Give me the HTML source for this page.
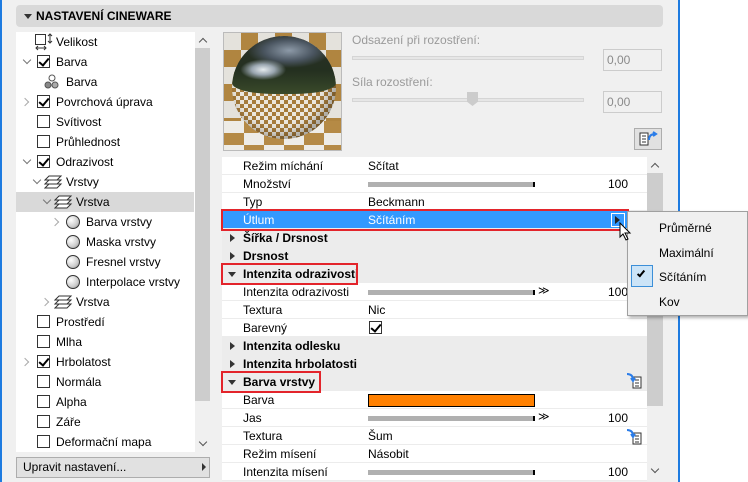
<!DOCTYPE html>
<html><head><meta charset="utf-8"><style>
*{box-sizing:border-box;margin:0;padding:0}
body{width:748px;height:482px;overflow:hidden;background:#f0f0f0;font-family:"Liberation Sans",sans-serif;font-size:12px;color:#000;position:relative}
.a{position:absolute}
.t{position:absolute;white-space:nowrap;line-height:14px}
.cb{position:absolute;width:13px;height:13px;border:1px solid #333;background:#fff}
.cb.c::after{content:"";position:absolute;left:3px;top:0px;width:4px;height:8px;border:solid #000;border-width:0 2px 2px 0;transform:rotate(40deg)}
.chev{position:absolute;width:6px;height:6px;border:solid #777;border-width:0 1.5px 1.5px 0}
.row{position:absolute;left:222px;width:425px;height:18px;background:#fff;border-bottom:1px solid #ececec}
.grp{background:#ececec;font-weight:bold}
.tri{position:absolute;left:8px;top:5px;width:0;height:0;border-left:5px solid #333;border-top:4px solid transparent;border-bottom:4px solid transparent}
.trid{position:absolute;left:6px;top:7px;width:0;height:0;border-top:5px solid #333;border-left:4px solid transparent;border-right:4px solid transparent}
.bar{position:absolute;left:146px;top:7px;width:167px;height:5px;background:#b0b0b0;border-right:2px solid #000}
.sph{position:absolute;width:14px;height:14px;border-radius:50%;border:1px solid #333;background:radial-gradient(circle at 35% 35%,#fff,#ccc 60%,#888)}
.red{position:absolute;border:2px solid #e3242b}
</style></head><body>
<div class="a" style="left:0;top:0;width:2px;height:482px;background:#1e7be0"></div>
<div class="a" style="left:678px;top:0;width:2px;height:482px;background:#1e7be0"></div>
<div class="a" style="left:680px;top:0;width:68px;height:482px;background:#fff"></div>
<!-- header -->
<div class="a" style="left:16px;top:5px;width:647px;height:22px;background:#d9d9d9;border-radius:4px"></div>
<div class="a" style="left:24px;top:14px;border-top:5px solid #333;border-left:4px solid transparent;border-right:4px solid transparent"></div>
<div class="t" style="left:36px;top:9px;font-weight:bold">NASTAVENÍ CINEWARE</div>
<!-- tree -->
<div class="a" style="left:16px;top:32px;width:179px;height:420px;background:#fff"></div>
<div class="a" style="left:195px;top:32px;width:15px;height:420px;background:#f0f0f0"></div>
<div class="a" style="left:195px;top:48px;width:15px;height:353px;background:#cdcdcd"></div>
<div class="chev" style="left:200px;top:39px;transform:rotate(-135deg);border-color:#555"></div>
<div class="chev" style="left:200px;top:439px;transform:rotate(45deg);border-color:#555"></div>
<div class="a" style="left:16px;top:192px;width:178px;height:20px;background:#d9d9d9"></div>
<svg class="a" style="left:34px;top:33px" width="20" height="18"><rect x="1.5" y="1.5" width="10" height="10" fill="none" stroke="#333"/><path d="M16 1v9M14 3l2-2 2 2M14 8l2 2 2-2M2 15h10M4 13l-2 2 2 2M10 13l2 2-2 2" stroke="#333" fill="none"/></svg>
<div class="t" style="left:56px;top:35px">Velikost</div>
<div class="chev" style="left:24px;top:57px;transform:rotate(45deg)"></div>
<div class="cb c" style="left:37px;top:55px"></div><div class="t" style="left:56px;top:55px">Barva</div>
<svg class="a" style="left:44px;top:74px" width="16" height="16"><circle cx="8" cy="4" r="3" fill="#fff" stroke="#555"/><circle cx="4" cy="11" r="3" fill="#888" stroke="#555"/><circle cx="11" cy="11" r="3" fill="#aaa" stroke="#555"/></svg>
<div class="t" style="left:66px;top:75px">Barva</div>
<div class="chev" style="left:22px;top:99px;transform:rotate(-45deg);border-color:#aaa"></div>
<div class="cb c" style="left:37px;top:95px"></div><div class="t" style="left:56px;top:95px">Povrchová úprava</div>
<div class="cb" style="left:37px;top:115px"></div><div class="t" style="left:56px;top:115px">Svítivost</div>
<div class="cb" style="left:37px;top:135px"></div><div class="t" style="left:56px;top:135px">Průhlednost</div>
<div class="chev" style="left:24px;top:157px;transform:rotate(45deg)"></div>
<div class="cb c" style="left:37px;top:155px"></div><div class="t" style="left:56px;top:155px">Odrazivost</div>
<div class="chev" style="left:34px;top:177px;transform:rotate(45deg)"></div>
<svg class="a" style="left:44px;top:174px" width="20" height="16"><path d="M5 2h12l-4 4H1zM5 6h12l-4 4H1zM5 10h12l-4 4H1z" fill="#fff" stroke="#333"/></svg>
<div class="t" style="left:66px;top:175px">Vrstvy</div>
<div class="chev" style="left:44px;top:197px;transform:rotate(45deg)"></div>
<svg class="a" style="left:54px;top:194px" width="20" height="16"><path d="M5 2h12l-4 4H1zM5 6h12l-4 4H1zM5 10h12l-4 4H1z" fill="#fff" stroke="#333"/></svg>
<div class="t" style="left:76px;top:195px">Vrstva</div>
<div class="chev" style="left:52px;top:219px;transform:rotate(-45deg);border-color:#aaa"></div>
<div class="sph" style="left:66px;top:215px"></div><div class="t" style="left:86px;top:215px">Barva vrstvy</div>
<div class="sph" style="left:66px;top:235px"></div><div class="t" style="left:86px;top:235px">Maska vrstvy</div>
<div class="sph" style="left:66px;top:255px"></div><div class="t" style="left:86px;top:255px">Fresnel vrstvy</div>
<div class="sph" style="left:66px;top:275px"></div><div class="t" style="left:86px;top:275px">Interpolace vrstvy</div>
<div class="chev" style="left:42px;top:299px;transform:rotate(-45deg);border-color:#aaa"></div>
<svg class="a" style="left:54px;top:294px" width="20" height="16"><path d="M5 2h12l-4 4H1zM5 6h12l-4 4H1zM5 10h12l-4 4H1z" fill="#fff" stroke="#333"/></svg>
<div class="t" style="left:76px;top:295px">Vrstva</div>
<div class="cb" style="left:37px;top:315px"></div><div class="t" style="left:56px;top:315px">Prostředí</div>
<div class="cb" style="left:37px;top:335px"></div><div class="t" style="left:56px;top:335px">Mlha</div>
<div class="chev" style="left:22px;top:359px;transform:rotate(-45deg);border-color:#aaa"></div>
<div class="cb c" style="left:37px;top:355px"></div><div class="t" style="left:56px;top:355px">Hrbolatost</div>
<div class="cb" style="left:37px;top:375px"></div><div class="t" style="left:56px;top:375px">Normála</div>
<div class="cb" style="left:37px;top:395px"></div><div class="t" style="left:56px;top:395px">Alpha</div>
<div class="cb" style="left:37px;top:415px"></div><div class="t" style="left:56px;top:415px">Záře</div>
<div class="cb" style="left:37px;top:435px"></div><div class="t" style="left:56px;top:435px">Deformační mapa</div>
<div class="a" style="left:16px;top:457px;width:194px;height:21px;background:#e1e1e1;border:1px solid #adadad"></div>
<div class="t" style="left:23px;top:460px">Upravit nastavení...</div>
<div class="a" style="left:202px;top:463px;border-left:4px solid #333;border-top:4px solid transparent;border-bottom:4px solid transparent"></div>
<!-- preview -->
<div class="a" style="left:223px;top:32px;width:119px;height:119px;border:1px solid #bbb;overflow:hidden;background:repeating-conic-gradient(#b08540 0 25%,#e4e2dc 0 50%) 0 0/34px 34px">
 <div class="a" style="left:0;top:88px;width:119px;height:32px;background:repeating-conic-gradient(#b58a45 0 25%,#eeece6 0 50%) 0 0/40px 24px"></div>
 <div class="a" style="left:8px;top:3px;width:104px;height:103px;border-radius:50%;overflow:hidden;background:repeating-conic-gradient(#a67c3c 0 25%,#ebe7dd 0 50%) 0 0/8px 8px;box-shadow:inset -5px -5px 10px rgba(0,0,0,.3)">
  <div class="a" style="left:0;top:0;width:104px;height:58px;border-radius:52px 52px 45% 45% / 52px 52px 12px 12px;background:radial-gradient(ellipse 22% 18% at 30% 58%,#e6ecef 0,#9aa6b0 50%,transparent 100%),radial-gradient(ellipse 40% 30% at 55% 25%,#8d9aa8 0,#4a5560 60%,transparent 100%),linear-gradient(#2a3028,#243020 60%,#3a4a2a)"></div>
 </div>
</div>
<div class="t" style="left:352px;top:33px;color:#9a9a9a">Odsazení při rozostření:</div>
<div class="a" style="left:352px;top:56px;width:232px;height:4px;background:#e6e6e6;border:1px solid #d5d5d5"></div>
<div class="a" style="left:603px;top:49px;width:59px;height:22px;border:1px solid #ccc;background:#f0f0f0"></div>
<div class="t" style="left:607px;top:53px;color:#8a8a8a">0,00</div>
<div class="t" style="left:352px;top:75px;color:#9a9a9a">Síla rozostření:</div>
<div class="a" style="left:352px;top:98px;width:232px;height:4px;background:#e6e6e6;border:1px solid #d5d5d5"></div>
<div class="a" style="left:467px;top:92px;width:11px;height:14px;background:#ccc;clip-path:polygon(0 0,100% 0,100% 70%,50% 100%,0 70%)"></div>
<div class="a" style="left:603px;top:91px;width:59px;height:22px;border:1px solid #ccc;background:#f0f0f0"></div>
<div class="t" style="left:607px;top:95px;color:#8a8a8a">0,00</div>
<div class="a" style="left:634px;top:128px;width:28px;height:22px;border:1px solid #adadad;background:#e1e1e1"></div>
<svg class="a" style="left:638px;top:130px" width="22" height="18"><path d="M2 3h8v12H2zM4 6h4M4 9h4M4 12h4" fill="#fff" stroke="#333"/><path d="M11 10c0-4 2-6 6-6M15 2l3 2-3 2" fill="none" stroke="#2b7de9" stroke-width="2"/></svg>
<!-- table -->
<div class="a" style="left:647px;top:157px;width:16px;height:321px;background:#f0f0f0"></div>
<div class="a" style="left:647px;top:173px;width:16px;height:233px;background:#cdcdcd"></div>
<div class="chev" style="left:652px;top:164px;transform:rotate(-135deg);border-color:#555"></div>
<div class="chev" style="left:652px;top:466px;transform:rotate(45deg);border-color:#555"></div>

<div class="row" style="top:157px"><div class="t" style="left:21px;top:2px">Režim míchání</div><div class="t" style="left:146px;top:2px">Sčítat</div></div>
<div class="row" style="top:175px"><div class="t" style="left:21px;top:2px">Množství</div><div class="bar"></div><div class="t" style="left:386px;top:2px">100</div></div>
<div class="row" style="top:193px"><div class="t" style="left:21px;top:2px">Typ</div><div class="t" style="left:146px;top:2px">Beckmann</div></div>
<div class="row" style="top:211px;background:#3399ff;color:#fff;width:405px"><div class="t" style="left:21px;top:2px">Útlum</div><div class="t" style="left:146px;top:2px">Sčítáním</div>
<div class="a" style="left:389px;top:2px;width:14px;height:14px;border:1.5px solid #fff;background:#3399ff"><div class="a" style="left:3px;top:2px;border-left:5px solid #222;border-top:4px solid transparent;border-bottom:4px solid transparent"></div></div></div>
<div class="row grp" style="top:229px"><div class="tri"></div><div class="t" style="left:21px;top:2px">Šířka / Drsnost</div></div>
<div class="row grp" style="top:247px"><div class="tri"></div><div class="t" style="left:21px;top:2px">Drsnost</div></div>
<div class="row grp" style="top:265px"><div class="trid"></div><div class="t" style="left:21px;top:2px">Intenzita odrazivosti</div></div>
<div class="row" style="top:283px"><div class="t" style="left:21px;top:2px">Intenzita odrazivosti</div><div class="bar"></div><div class="t" style="left:316px;top:1px;font-size:11px">≫</div><div class="t" style="left:386px;top:2px">100</div></div>
<div class="row" style="top:301px"><div class="t" style="left:21px;top:2px">Textura</div><div class="t" style="left:146px;top:2px">Nic</div></div>
<div class="row" style="top:319px"><div class="t" style="left:21px;top:2px">Barevný</div><div class="cb c" style="left:147px;top:2px"></div></div>
<div class="row grp" style="top:337px"><div class="tri"></div><div class="t" style="left:21px;top:2px">Intenzita odlesku</div></div>
<div class="row grp" style="top:355px"><div class="tri"></div><div class="t" style="left:21px;top:2px">Intenzita hrbolatosti</div></div>
<div class="row grp" style="top:373px"><div class="trid"></div><div class="t" style="left:21px;top:2px">Barva vrstvy</div>
<svg class="a" style="left:404px;top:-2px" width="18" height="18"><path d="M7 6h8v11H7zM9 9h4M9 12h4M9 15h4" fill="#fff" stroke="#333"/><path d="M1 3c4 0 6 2 6 6M5 7l2 3 2-3" fill="none" stroke="#2b7de9" stroke-width="2"/></svg></div>
<div class="row" style="top:391px"><div class="t" style="left:21px;top:2px">Barva</div><div class="a" style="left:146px;top:3px;width:167px;height:13px;background:#ff8000;border:1px solid #000"></div></div>
<div class="row" style="top:409px"><div class="t" style="left:21px;top:2px">Jas</div><div class="bar"></div><div class="t" style="left:316px;top:1px;font-size:11px">≫</div><div class="t" style="left:386px;top:2px">100</div></div>
<div class="row" style="top:427px"><div class="t" style="left:21px;top:2px">Textura</div><div class="t" style="left:146px;top:2px">Šum</div>
<svg class="a" style="left:404px;top:0px" width="18" height="18"><path d="M7 6h8v11H7zM9 9h4M9 12h4M9 15h4" fill="#fff" stroke="#333"/><path d="M1 3c4 0 6 2 6 6M5 7l2 3 2-3" fill="none" stroke="#2b7de9" stroke-width="2"/></svg></div>
<div class="row" style="top:445px"><div class="t" style="left:21px;top:2px">Režim mísení</div><div class="t" style="left:146px;top:2px">Násobit</div></div>
<div class="row" style="top:463px"><div class="t" style="left:21px;top:2px">Intenzita mísení</div><div class="bar"></div><div class="t" style="left:386px;top:2px">100</div></div>

<div class="red" style="left:221px;top:209px;width:408px;height:22px"></div>
<div class="red" style="left:221px;top:263px;width:137px;height:22px"></div>
<div class="red" style="left:221px;top:371px;width:100px;height:22px"></div>
<!-- popup -->
<div class="a" style="left:627px;top:211px;width:121px;height:105px;background:#f0f0f0;border:1px solid #a0a0a0;box-shadow:2px 2px 3px rgba(0,0,0,.3)"></div>
<div class="t" style="left:659px;top:221px">Průměrné</div>
<div class="t" style="left:659px;top:246px">Maximální</div>
<div class="a" style="left:631px;top:265px;width:22px;height:22px;background:#cce4f7;border:1px solid #3c8fd8"></div>
<div class="a" style="left:639px;top:269px;width:4px;height:8px;border:solid #000;border-width:0 2px 2px 0;transform:rotate(40deg)"></div>
<div class="t" style="left:659px;top:270px">Sčítáním</div>
<div class="t" style="left:659px;top:295px">Kov</div>
<svg class="a" style="left:619px;top:222px" width="14" height="20"><path d="M1 1v14l3-3 3 6 2-1-3-6h5z" fill="#fff" stroke="#000"/></svg>
</body></html>
